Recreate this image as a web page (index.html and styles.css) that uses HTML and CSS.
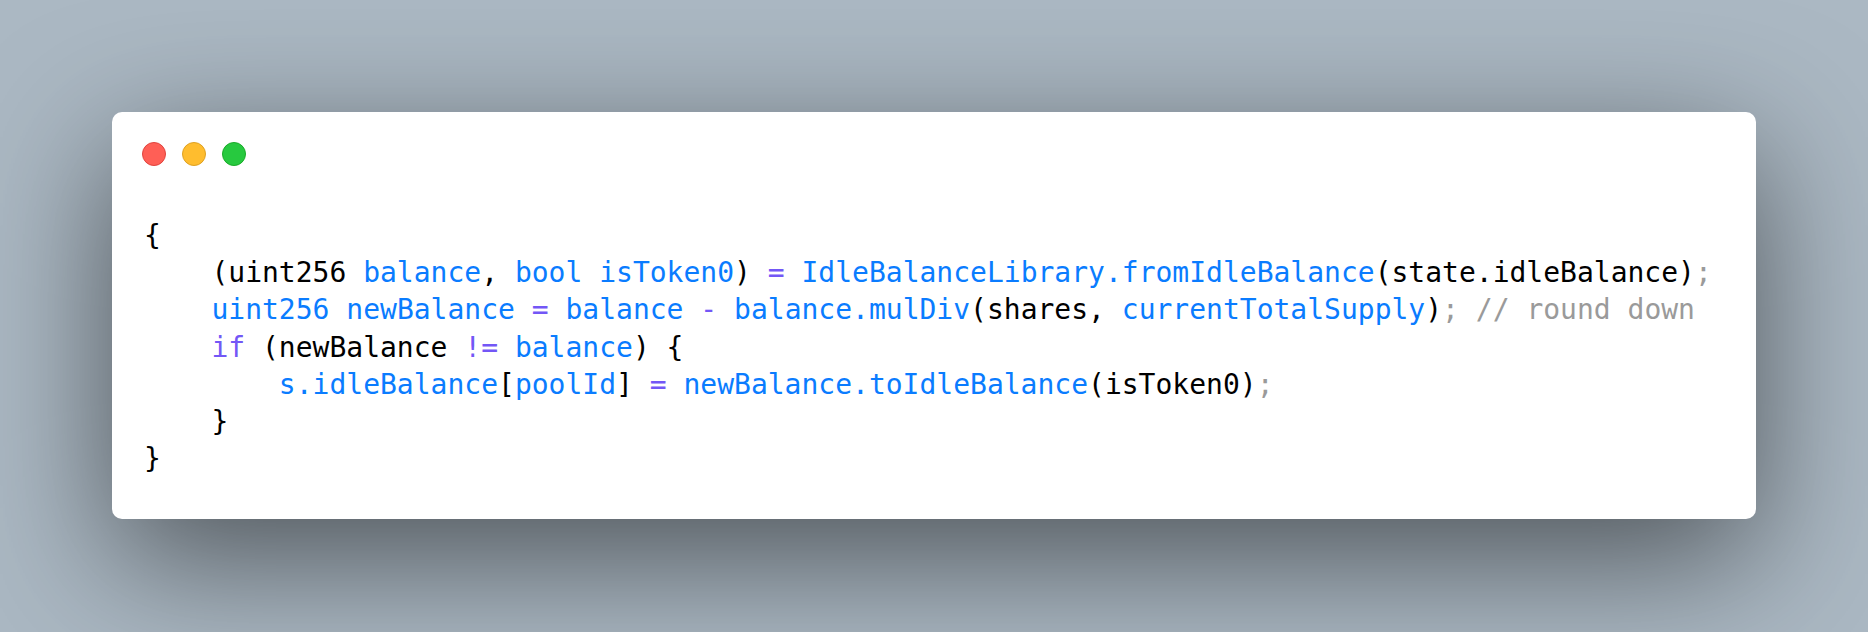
FILE: index.html
```html
<!DOCTYPE html>
<html>
<head>
<meta charset="utf-8">
<link rel="stylesheet" href="styles.css">
</head>
<body>
<div class="stage">
  <div class="window">
    <div class="controls">
      <span class="dot red"></span>
      <span class="dot yellow"></span>
      <span class="dot green"></span>
    </div>
<pre class="code">{
    (uint256 <span class="b">balance</span>, <span class="b">bool</span> <span class="b">isToken0</span>) <span class="p">=</span> <span class="b">IdleBalanceLibrary</span><span class="b">.fromIdleBalance</span>(state.idleBalance)<span class="g">;</span>
    <span class="b">uint256</span> <span class="b">newBalance</span> <span class="p">=</span> <span class="b">balance</span> <span class="p">-</span> <span class="b">balance.mulDiv</span>(shares, <span class="b">currentTotalSupply</span>)<span class="g">; // round down</span>
    <span class="p">if</span> (newBalance <span class="p">!=</span> <span class="b">balance</span>) {
        <span class="b">s.idleBalance</span>[<span class="b">poolId</span>] <span class="p">=</span> <span class="b">newBalance.toIdleBalance</span>(isToken0)<span class="g">;</span>
    }
}</pre>
  </div>
</div>
</body>
</html>
```
FILE: styles.css
```css
html, body {
  margin: 0;
  padding: 0;
}
body {
  width: 1868px;
  height: 632px;
  overflow: hidden;
}
.stage {
  box-sizing: border-box;
  width: 1868px;
  height: 632px;
  padding: 112px;
  background: #abb8c3;
}
.window {
  box-sizing: border-box;
  height: 407px;
  background: #ffffff;
  border-radius: 10px;
  box-shadow: 0 40px 136px rgba(0, 0, 0, 0.55);
  padding: 30px 30px 0 30px;
}
.controls {
  display: flex;
  gap: 16px;
}
.dot {
  display: block;
  width: 24px;
  height: 24px;
  border-radius: 50%;
  box-sizing: border-box;
}
.red { background: #ff5f56; border: 1px solid #e0443e; }
.yellow { background: #ffbd2e; border: 1px solid #dea123; }
.green { background: #27c93f; border: 1px solid #1aab29; }
.code {
  margin: 51px 0 0 2px;
  font-family: "DejaVu Sans Mono", monospace;
  font-size: 28px;
  line-height: 37.24px;
  color: #000000;
  white-space: pre;
}
.b { color: #0a7cff; }
.p { color: #7357f6; }
.g { color: #9a9a9a; }
```
